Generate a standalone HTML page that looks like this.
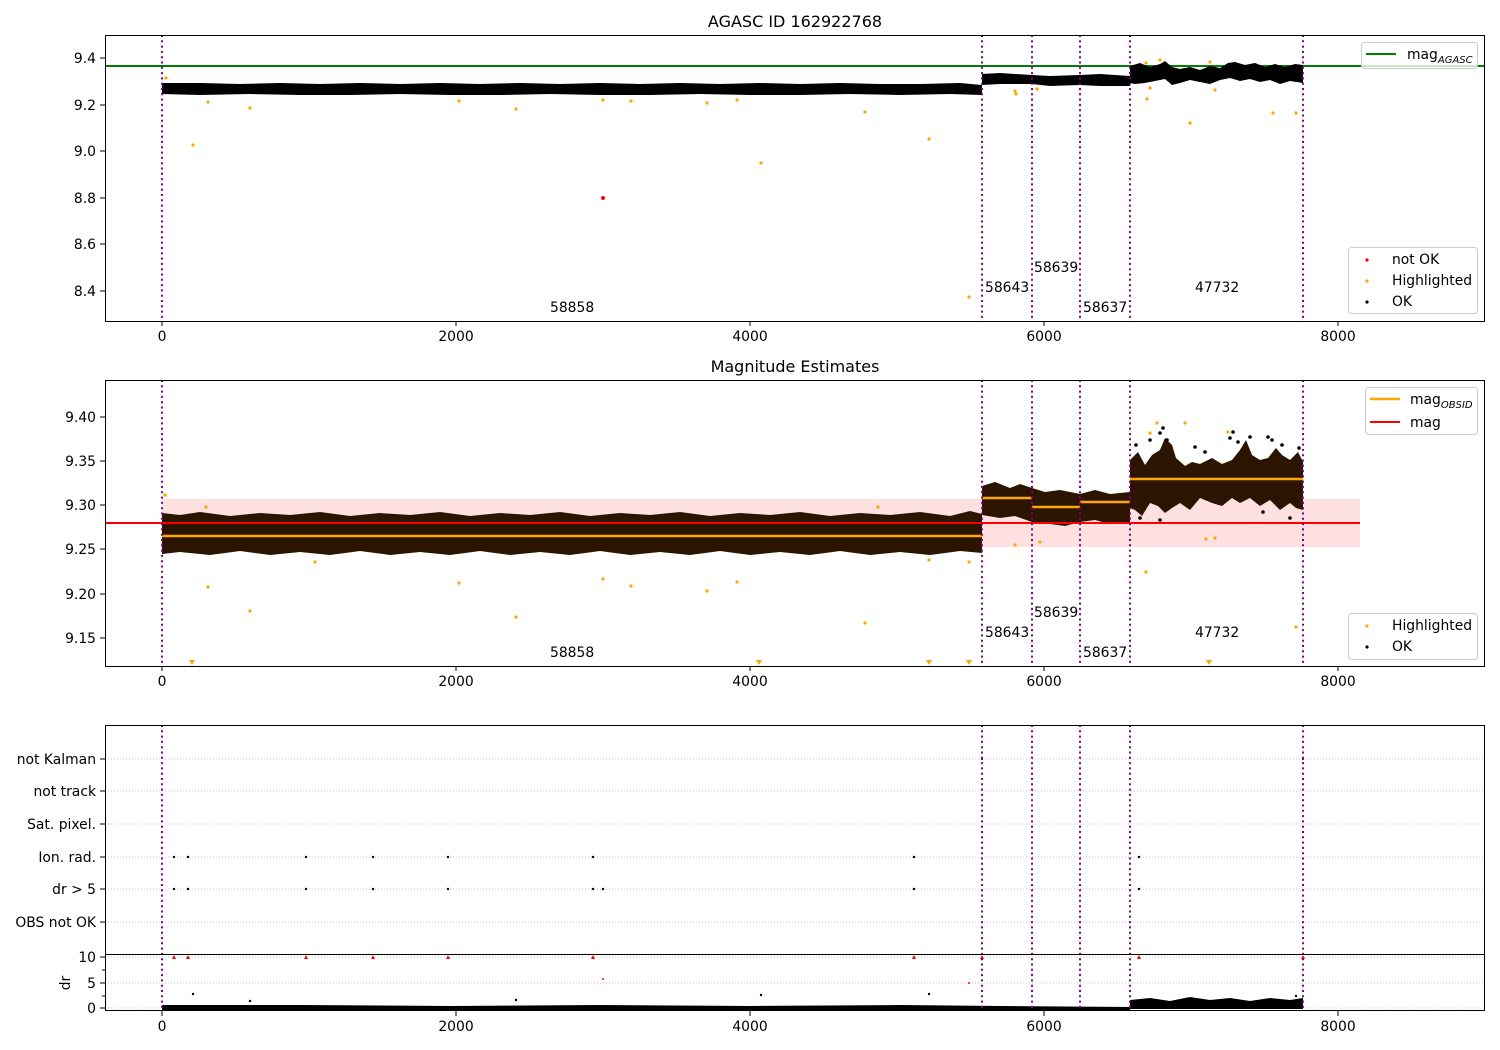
<!DOCTYPE html>
<html><head><meta charset="utf-8"><style>
html,body{margin:0;padding:0;background:#fff}
svg{display:block}
text{font-family:"DejaVu Sans","Liberation Sans",sans-serif;font-size:13.9px;fill:#000}
.t{font-size:16px}
.vl{stroke:#800080;stroke-width:2;stroke-dasharray:2,3.3}
.g{stroke:#b0b0b0;stroke-width:0.8;stroke-dasharray:1,2}
.o{fill:orange}
</style></head><body>
<svg width="1500" height="1050" viewBox="0 0 1500 1050" xmlns="http://www.w3.org/2000/svg">
<!-- ============ PANEL 1 ============ -->
<text class="t" x="795" y="27" text-anchor="middle">AGASC ID 162922768</text>
<line x1="105" y1="66" x2="1485" y2="66" stroke="green" stroke-width="2"/>
<path d="M162,83 L200,83 240,84 280,83 320,84 360,83 400,84 440,83 480,84 520,83 560,84 600,83 640,84 680,83 720,84 760,83 800,84 840,83 880,84 920,84 960,83 982,85 L982,95 950,94 900,95 850,94 800,95 750,95 700,94 650,95 600,95 550,94 500,95 450,95 400,94 350,95 300,95 250,94 200,95 162,94Z"/>
<path d="M982,74 L1000,73 1032,75 1050,76 1080,75 1100,74 1130,76 L1130,86 1100,86 1080,85 1050,86 1032,84 1000,84 982,85Z"/>
<path d="M1130,66 1140,63 1150,67 1160,64 1165,61 1172,67 1180,69 1190,67 1200,70 1210,66 1220,68 1228,63 1235,62 1245,65 1255,63 1265,67 1275,64 1285,67 1295,64 1303,65 L1303,83 1290,81 1280,84 1270,80 1260,82 1250,79 1240,81 1230,78 1220,80 1210,84 1200,82 1190,80 1180,83 1172,85 1165,79 1155,81 1145,83 1135,84 1130,83Z"/>
<g class="o">
<circle cx="166" cy="78" r="1.6"/><circle cx="193" cy="145" r="1.6"/><circle cx="208" cy="102" r="1.6"/><circle cx="250" cy="108" r="1.6"/><circle cx="459" cy="101" r="1.6"/><circle cx="516" cy="109" r="1.6"/><circle cx="603" cy="100" r="1.6"/><circle cx="631" cy="101" r="1.6"/><circle cx="707" cy="103" r="1.6"/><circle cx="737" cy="100" r="1.6"/><circle cx="761" cy="163" r="1.6"/><circle cx="865" cy="112" r="1.6"/><circle cx="929" cy="139" r="1.6"/><circle cx="969" cy="297" r="1.6"/><circle cx="1015" cy="91" r="1.6"/><circle cx="1016" cy="94" r="1.6"/><circle cx="1037" cy="89" r="1.6"/><circle cx="1147" cy="99" r="1.6"/><circle cx="1150" cy="88" r="1.6"/><circle cx="1190" cy="123" r="1.6"/><circle cx="1215" cy="90" r="1.6"/><circle cx="1273" cy="113" r="1.6"/><circle cx="1296" cy="113" r="1.6"/><circle cx="1146" cy="63" r="1.6"/><circle cx="1160" cy="60" r="1.6"/><circle cx="1210" cy="62" r="1.6"/>
</g>
<circle cx="603" cy="198" r="2" fill="red"/>
<g class="vl"><line x1="162" y1="35" x2="162" y2="321"/><line x1="982" y1="35" x2="982" y2="321"/><line x1="1032" y1="35" x2="1032" y2="321"/><line x1="1080" y1="35" x2="1080" y2="321"/><line x1="1130" y1="35" x2="1130" y2="321"/><line x1="1303" y1="35" x2="1303" y2="321"/></g>
<text x="550" y="312">58858</text><text x="985" y="292">58643</text><text x="1034" y="272">58639</text><text x="1083" y="312">58637</text><text x="1195" y="292">47732</text>
<rect x="105.5" y="35.5" width="1379" height="286" fill="none" stroke="#000" stroke-width="1"/>
<g stroke="#000"><line x1="100" y1="58" x2="105" y2="58"/><line x1="100" y1="105" x2="105" y2="105"/><line x1="100" y1="151" x2="105" y2="151"/><line x1="100" y1="198" x2="105" y2="198"/><line x1="100" y1="244" x2="105" y2="244"/><line x1="100" y1="291" x2="105" y2="291"/>
<line x1="162" y1="321" x2="162" y2="326"/><line x1="456" y1="321" x2="456" y2="326"/><line x1="750" y1="321" x2="750" y2="326"/><line x1="1044" y1="321" x2="1044" y2="326"/><line x1="1338" y1="321" x2="1338" y2="326"/></g>
<g text-anchor="end"><text x="96" y="63">9.4</text><text x="96" y="110">9.2</text><text x="96" y="156">9.0</text><text x="96" y="203">8.8</text><text x="96" y="249">8.6</text><text x="96" y="296">8.4</text></g>
<g text-anchor="middle"><text x="162" y="341">0</text><text x="456" y="341">2000</text><text x="750" y="341">4000</text><text x="1044" y="341">6000</text><text x="1338" y="341">8000</text></g>
<rect x="1361.5" y="42.5" width="116" height="26" rx="3" fill="#fff" fill-opacity="0.8" stroke="#ccc"/>
<line x1="1366" y1="54" x2="1396" y2="54" stroke="green" stroke-width="2"/>
<text x="1407" y="59">mag<tspan font-size="10" font-style="italic" dy="4">AGASC</tspan></text>
<rect x="1348.5" y="247.5" width="129" height="66" rx="3" fill="#fff" fill-opacity="0.8" stroke="#ccc"/>
<circle cx="1367" cy="260" r="1.6" fill="red"/><circle cx="1367" cy="281" r="1.6" fill="orange"/><circle cx="1367" cy="302" r="1.6" fill="#000"/>
<text x="1392" y="264">not OK</text><text x="1392" y="285">Highlighted</text><text x="1392" y="306">OK</text>

<!-- ============ PANEL 2 ============ -->
<text class="t" x="795" y="372" text-anchor="middle">Magnitude Estimates</text>
<rect x="162" y="499" width="1198" height="48" fill="#ff0000" fill-opacity="0.12"/>
<rect x="1130" y="462" width="173" height="36" fill="orange" fill-opacity="0.1"/>
<path d="M162,513 L180,515 200,512 230,516 260,513 290,515 320,512 350,516 380,513 410,515 440,512 470,516 500,513 530,515 560,512 590,516 620,513 650,515 680,512 710,516 740,513 770,515 800,512 830,516 860,513 890,515 920,512 950,516 970,511 982,514 L982,553 960,551 930,555 900,552 870,555 840,551 810,555 780,552 750,555 720,551 690,555 660,552 630,555 600,551 570,555 540,552 510,555 480,551 450,555 420,552 390,555 360,551 330,555 300,552 270,555 240,551 210,555 180,552 162,554Z" fill="#2b1400"/>
<path d="M982,486 L995,482 1010,488 1020,484 1032,488 1045,492 1060,490 1080,494 1095,490 1110,494 1130,492 L1130,522 1110,524 1095,520 1080,522 1065,526 1050,524 1032,522 1015,516 1000,518 982,515Z" fill="#2b1400"/>
<path d="M1130,460 1138,452 1145,465 1152,455 1160,450 1165,438 1172,445 1176,458 1185,466 1192,462 1200,464 1212,458 1222,464 1232,460 1240,450 1246,440 1252,455 1260,460 1268,458 1276,448 1282,455 1290,460 1298,452 1303,462 L1303,510 1296,508 1290,503 1280,510 1270,500 1260,506 1250,498 1240,503 1232,498 1222,506 1212,503 1200,498 1190,510 1180,503 1172,508 1165,513 1158,506 1150,503 1142,516 1135,510 1130,508Z" fill="#2b1400"/>
<g fill="#000">
<circle cx="1136" cy="445" r="1.8"/><circle cx="1150" cy="440" r="1.8"/><circle cx="1160" cy="433" r="1.8"/><circle cx="1163" cy="428" r="1.8"/><circle cx="1167" cy="440" r="1.8"/><circle cx="1195" cy="447" r="1.8"/><circle cx="1205" cy="452" r="1.8"/><circle cx="1230" cy="438" r="1.8"/><circle cx="1233" cy="432" r="1.8"/><circle cx="1238" cy="442" r="1.8"/><circle cx="1250" cy="437" r="1.8"/><circle cx="1268" cy="437" r="1.8"/><circle cx="1272" cy="440" r="1.8"/><circle cx="1282" cy="445" r="1.8"/><circle cx="1299" cy="448" r="1.8"/><circle cx="1140" cy="518" r="1.8"/><circle cx="1160" cy="520" r="1.8"/><circle cx="1263" cy="512" r="1.8"/><circle cx="1290" cy="518" r="1.8"/>
</g>
<line x1="162" y1="536" x2="982" y2="536" stroke="orange" stroke-width="2.5"/>
<line x1="982" y1="498" x2="1032" y2="498" stroke="orange" stroke-width="2.5"/>
<line x1="1032" y1="507" x2="1080" y2="507" stroke="orange" stroke-width="2.5"/>
<line x1="1080" y1="502" x2="1130" y2="502" stroke="orange" stroke-width="2.5"/>
<line x1="1130" y1="479" x2="1303" y2="479" stroke="orange" stroke-width="2.5"/>
<line x1="105" y1="523" x2="1360" y2="523" stroke="red" stroke-width="2"/>
<g class="o">
<circle cx="165" cy="495" r="1.6"/><circle cx="206" cy="507" r="1.6"/><circle cx="208" cy="587" r="1.6"/><circle cx="250" cy="611" r="1.6"/><circle cx="315" cy="562" r="1.6"/><circle cx="459" cy="583" r="1.6"/><circle cx="516" cy="617" r="1.6"/><circle cx="603" cy="579" r="1.6"/><circle cx="631" cy="586" r="1.6"/><circle cx="707" cy="591" r="1.6"/><circle cx="737" cy="582" r="1.6"/><circle cx="865" cy="623" r="1.6"/><circle cx="878" cy="507" r="1.6"/><circle cx="929" cy="560" r="1.6"/><circle cx="969" cy="562" r="1.6"/><circle cx="1015" cy="545" r="1.6"/><circle cx="1040" cy="542" r="1.6"/><circle cx="1150" cy="433" r="1.6"/><circle cx="1146" cy="572" r="1.6"/><circle cx="1157" cy="423" r="1.6"/><circle cx="1185" cy="423" r="1.6"/><circle cx="1206" cy="539" r="1.6"/><circle cx="1215" cy="538" r="1.6"/><circle cx="1228" cy="432" r="1.6"/><circle cx="1296" cy="627" r="1.6"/>
<path d="M189,660 l6,0 -3,5Z M756,660 l6,0 -3,5Z M926,660 l6,0 -3,5Z M966,660 l6,0 -3,5Z M1206,660 l6,0 -3,5Z"/>
</g>
<g class="vl"><line x1="162" y1="380" x2="162" y2="666"/><line x1="982" y1="380" x2="982" y2="666"/><line x1="1032" y1="380" x2="1032" y2="666"/><line x1="1080" y1="380" x2="1080" y2="666"/><line x1="1130" y1="380" x2="1130" y2="666"/><line x1="1303" y1="380" x2="1303" y2="666"/></g>
<text x="550" y="657">58858</text><text x="985" y="637">58643</text><text x="1034" y="617">58639</text><text x="1083" y="657">58637</text><text x="1195" y="637">47732</text>
<rect x="105.5" y="380.5" width="1379" height="286" fill="none" stroke="#000"/>
<g stroke="#000"><line x1="100" y1="417" x2="105" y2="417"/><line x1="100" y1="461" x2="105" y2="461"/><line x1="100" y1="505" x2="105" y2="505"/><line x1="100" y1="549" x2="105" y2="549"/><line x1="100" y1="594" x2="105" y2="594"/><line x1="100" y1="638" x2="105" y2="638"/>
<line x1="162" y1="666" x2="162" y2="671"/><line x1="456" y1="666" x2="456" y2="671"/><line x1="750" y1="666" x2="750" y2="671"/><line x1="1044" y1="666" x2="1044" y2="671"/><line x1="1338" y1="666" x2="1338" y2="671"/></g>
<g text-anchor="end"><text x="96" y="422">9.40</text><text x="96" y="466">9.35</text><text x="96" y="510">9.30</text><text x="96" y="554">9.25</text><text x="96" y="599">9.20</text><text x="96" y="643">9.15</text></g>
<g text-anchor="middle"><text x="162" y="686">0</text><text x="456" y="686">2000</text><text x="750" y="686">4000</text><text x="1044" y="686">6000</text><text x="1338" y="686">8000</text></g>
<rect x="1365.5" y="387.5" width="112" height="47" rx="3" fill="#fff" fill-opacity="0.8" stroke="#ccc"/>
<line x1="1370" y1="399" x2="1400" y2="399" stroke="orange" stroke-width="2.5"/>
<line x1="1370" y1="422" x2="1400" y2="422" stroke="red" stroke-width="2"/>
<text x="1410" y="404">mag<tspan font-size="10" font-style="italic" dy="4">OBSID</tspan></text>
<text x="1410" y="427">mag</text>
<rect x="1348.5" y="613.5" width="129" height="46" rx="3" fill="#fff" fill-opacity="0.8" stroke="#ccc"/>
<circle cx="1367" cy="626" r="1.6" fill="orange"/><circle cx="1367" cy="647" r="1.6" fill="#000"/>
<text x="1392" y="630">Highlighted</text><text x="1392" y="651">OK</text>

<!-- ============ PANEL 3 ============ -->
<g class="g"><line x1="105" y1="759" x2="1485" y2="759"/><line x1="105" y1="791" x2="1485" y2="791"/><line x1="105" y1="824" x2="1485" y2="824"/><line x1="105" y1="857" x2="1485" y2="857"/><line x1="105" y1="889" x2="1485" y2="889"/><line x1="105" y1="922" x2="1485" y2="922"/>
<line x1="105" y1="957" x2="1485" y2="957"/><line x1="105" y1="983" x2="1485" y2="983"/><line x1="105" y1="1008" x2="1485" y2="1008"/></g>
<g fill="#000">
<circle cx="174" cy="857" r="1.2"/><circle cx="188" cy="857" r="1.2"/><circle cx="306" cy="857" r="1.2"/><circle cx="373" cy="857" r="1.2"/><circle cx="448" cy="857" r="1.2"/><circle cx="593" cy="857" r="1.2"/><circle cx="914" cy="857" r="1.2"/><circle cx="1139" cy="857" r="1.2"/>
<circle cx="174" cy="889" r="1.2"/><circle cx="188" cy="889" r="1.2"/><circle cx="306" cy="889" r="1.2"/><circle cx="373" cy="889" r="1.2"/><circle cx="448" cy="889" r="1.2"/><circle cx="593" cy="889" r="1.2"/><circle cx="603" cy="889" r="1.2"/><circle cx="914" cy="889" r="1.2"/><circle cx="1139" cy="889" r="1.2"/>
<circle cx="982" cy="759" r="1"/><circle cx="1303" cy="759" r="1"/>
<circle cx="193" cy="994" r="1.2"/><circle cx="250" cy="1001" r="1.2"/><circle cx="516" cy="1000" r="1.2"/><circle cx="761" cy="995" r="1.2"/><circle cx="929" cy="994" r="1.2"/><circle cx="1296" cy="996" r="1.2"/>
</g>
<path d="M162,1005 L300,1005 450,1006 600,1005 750,1006 900,1005 1000,1006 1130,1007 L1130,1010 162,1010Z"/>
<path d="M1130,1000 1150,998 1170,1001 1190,997 1210,1000 1230,998 1250,1001 1270,998 1290,1000 1303,998 L1303,1009 1130,1009Z"/>
<g fill="red">
<path d="M172,959 l2,-4 2,4Z M186,959 l2,-4 2,4Z M304,959 l2,-4 2,4Z M371,959 l2,-4 2,4Z M446,959 l2,-4 2,4Z M591,959 l2,-4 2,4Z M912,959 l2,-4 2,4Z M980,959 l2,-4 2,4Z M1137,959 l2,-4 2,4Z M1301,959 l2,-4 2,4Z"/>
<circle cx="603" cy="979" r="1"/><circle cx="969" cy="983" r="1"/>
</g>
<g class="vl"><line x1="162" y1="725" x2="162" y2="1011"/><line x1="982" y1="725" x2="982" y2="1011"/><line x1="1032" y1="725" x2="1032" y2="1011"/><line x1="1080" y1="725" x2="1080" y2="1011"/><line x1="1130" y1="725" x2="1130" y2="1011"/><line x1="1303" y1="725" x2="1303" y2="1011"/></g>
<line x1="105" y1="954.5" x2="1485" y2="954.5" stroke="#000"/>
<rect x="105.5" y="725.5" width="1379" height="285" fill="none" stroke="#000"/>
<g stroke="#000"><line x1="100" y1="759" x2="105" y2="759"/><line x1="100" y1="791" x2="105" y2="791"/><line x1="100" y1="824" x2="105" y2="824"/><line x1="100" y1="857" x2="105" y2="857"/><line x1="100" y1="889" x2="105" y2="889"/><line x1="100" y1="922" x2="105" y2="922"/>
<line x1="100" y1="957" x2="105" y2="957"/><line x1="100" y1="983" x2="105" y2="983"/><line x1="100" y1="1008" x2="105" y2="1008"/>
<line x1="102" y1="970" x2="105" y2="970"/><line x1="102" y1="996" x2="105" y2="996"/>
<line x1="162" y1="1011" x2="162" y2="1016"/><line x1="456" y1="1011" x2="456" y2="1016"/><line x1="750" y1="1011" x2="750" y2="1016"/><line x1="1044" y1="1011" x2="1044" y2="1016"/><line x1="1338" y1="1011" x2="1338" y2="1016"/></g>
<g text-anchor="end"><text x="96" y="764">not Kalman</text><text x="96" y="796">not track</text><text x="96" y="829">Sat. pixel.</text><text x="96" y="862">Ion. rad.</text><text x="96" y="894">dr &gt; 5</text><text x="96" y="927">OBS not OK</text>
<text x="96" y="962">10</text><text x="96" y="988">5</text><text x="96" y="1013">0</text></g>
<text x="70" y="983" transform="rotate(-90 70 983)" text-anchor="middle">dr</text>
<g text-anchor="middle"><text x="162" y="1031">0</text><text x="456" y="1031">2000</text><text x="750" y="1031">4000</text><text x="1044" y="1031">6000</text><text x="1338" y="1031">8000</text></g>
</svg>
</body></html>
